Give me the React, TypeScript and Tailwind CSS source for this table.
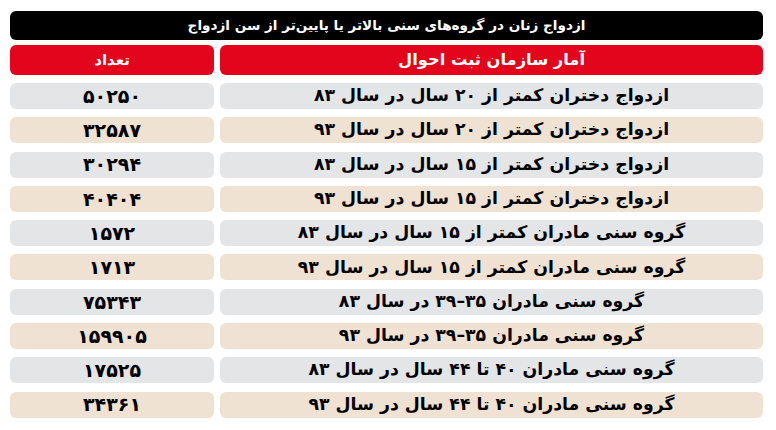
const rows: [string, string][] = [
  ["ازدواج دختران کمتر از ۲۰ سال در سال ۸۳", "۵۰۲۵۰"],
  ["ازدواج دختران کمتر از ۲۰ سال در سال ۹۳", "۳۲۵۸۷"],
  ["ازدواج دختران کمتر از ۱۵ سال در سال ۸۳", "۳۰۲۹۴"],
  ["ازدواج دختران کمتر از ۱۵ سال در سال ۹۳", "۴۰۴۰۴"],
  ["گروه سنی مادران کمتر از ۱۵ سال در سال ۸۳", "۱۵۷۲"],
  ["گروه سنی مادران کمتر از ۱۵ سال در سال ۹۳", "۱۷۱۳"],
  ["گروه سنی مادران ۳۵–۳۹ در سال ۸۳", "۷۵۳۴۳"],
  ["گروه سنی مادران ۳۵–۳۹ در سال ۹۳", "۱۵۹۹۰۵"],
  ["گروه سنی مادران ۴۰ تا ۴۴ سال در سال ۸۳", "۱۷۵۲۵"],
  ["گروه سنی مادران ۴۰ تا ۴۴ سال در سال ۹۳", "۳۴۳۶۱"],
];

export default function App() {
  return (
    <div className="h-[430px] w-[776px] bg-white pl-[10px] pr-[13px] pt-[11px] font-['DejaVu_Sans',sans-serif] font-bold">
      <div
        dir="rtl"
        className="flex h-[29px] items-center justify-center rounded-[6px] bg-black text-[13.6px] text-white"
      >
        ازدواج زنان در گروه‌های سنی بالاتر یا پایین‌تر از سن ازدواج
      </div>

      <div className="mt-[5px] flex h-[30px] gap-[6px] text-white">
        <div dir="rtl" className="flex w-[204px] items-center justify-center rounded-[6px] bg-[#e3051b] text-[15px]">
          تعداد
        </div>
        <div dir="rtl" className="flex flex-1 items-center justify-center rounded-[6px] bg-[#e3051b] text-[16.3px]">
          آمار سازمان ثبت احوال
        </div>
      </div>

      <div className="mt-[8px] flex flex-col gap-[8.3px] text-black">
        {rows.map(([label, count], index) => {
          const bg = index % 2 === 0 ? "bg-[#e4e5e7]" : "bg-[#efe2d2]";
          return (
            <div key={label} className="flex h-[26px] gap-[6px]">
              <div
                dir="rtl"
                className={`flex w-[204px] items-center justify-center rounded-[6px] text-[19px] ${bg}`}
              >
                {count}
              </div>
              <div
                dir="rtl"
                className={`flex flex-1 items-center justify-center rounded-[6px] text-[17.3px] ${bg}`}
              >
                {label}
              </div>
            </div>
          );
        })}
      </div>
    </div>
  );
}
